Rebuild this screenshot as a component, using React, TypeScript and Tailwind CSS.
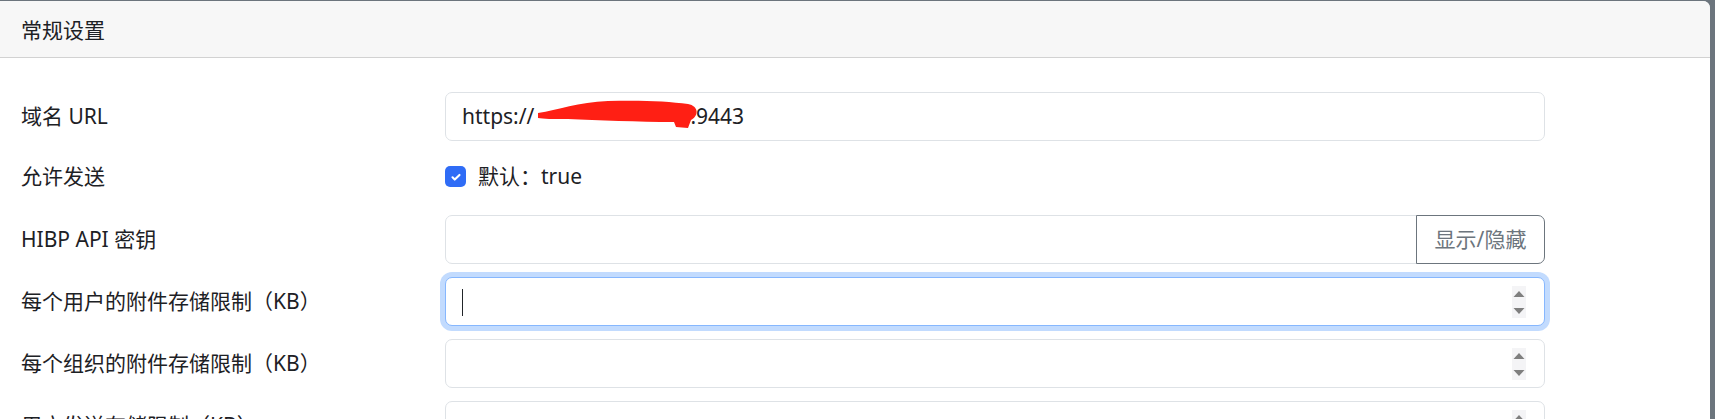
import React from "react";

const font = "font-['Noto_Sans','Noto_Sans_CJK_SC',sans-serif]";

function Spinner() {
  return (
    <div className="absolute right-[18px] top-[8px] h-[32px] w-[14px] bg-[#f4f4f6]">
      <svg width="14" height="32" viewBox="0 0 14 32">
        <polygon points="7,5 12.5,11 1.5,11" fill="#7f7f7f" />
        <polygon points="1.5,22 12.5,22 7,28" fill="#7f7f7f" />
      </svg>
    </div>
  );
}

function Row({ label, children }: { label: string; children: React.ReactNode }) {
  return (
    <div className="flex h-[49px] items-center">
      <div className="w-[424px] shrink-0">{label}</div>
      <div className="w-[1100px]">{children}</div>
    </div>
  );
}

export default function App() {
  return (
    <div
      className={`min-h-[419px] bg-[#6c757d] pr-[5px] pt-px text-[21px] text-[#1d2125] [text-spacing-trim:space-all] ${font}`}
    >
      <div className="h-[418px] overflow-hidden rounded-tr-[7px] bg-white">
        {/* 卡片头部 */}
        <div className="flex h-[57px] items-center border-b border-[#d2d2d2] bg-[#f7f7f7] pl-[21px] pt-[3px]">
          常规设置
        </div>

        {/* 表单 */}
        <div className="flex flex-col gap-[13px] pl-[21px] pt-[34px]">
          <Row label="域名 URL">
            <div className="relative flex h-[49px] w-full items-center rounded-[7px] border border-[#dee2e6] bg-white px-4">
              <span>https://</span>
              <span className="w-[156px]" />
              <span>.9443</span>
              <svg
                className="absolute left-[92px] top-[7px]"
                width="162"
                height="30"
                viewBox="0 0 162 30"
              >
                <path
                  d="M0,13 C20,10 40,2 70,1 C100,0 130,1 150,4 C161,6 161,16 153,20 L150,28 L138,27 L136,22 C100,22 60,20 30,19 C15,19 5,19 0,18 Z"
                  fill="#ff1f14"
                />
              </svg>
            </div>
          </Row>

          <div className="flex h-[48px] items-center pb-[3px]">
            <div className="w-[424px] shrink-0">允许发送</div>
            <label className="flex items-center gap-3">
              <span className="flex h-[21px] w-[21px] items-center justify-center rounded-[5px] bg-[#2f6cf6]">
                <svg width="14" height="14" viewBox="0 0 20 20">
                  <path
                    d="M5 10.5l3.2 3.2L15 7"
                    fill="none"
                    stroke="#fff"
                    strokeWidth="3"
                    strokeLinecap="round"
                    strokeLinejoin="round"
                  />
                </svg>
              </span>
              <span>默认：true</span>
            </label>
          </div>

          <Row label="HIBP API 密钥">
            <div className="flex h-[49px] w-full">
              <input
                type="password"
                className="h-full min-w-0 flex-1 rounded-l-[7px] border border-[#dee2e6] bg-white px-4 outline-none"
              />
              <button className="-ml-px h-full w-[129px] rounded-r-[7px] border border-[#6c757d] bg-white text-[#6c757d]">
                显示/隐藏
              </button>
            </div>
          </Row>

          <Row label="每个用户的附件存储限制（KB）">
            <div className="relative h-[49px] w-full rounded-[7px] border border-[#86b7fe] bg-white shadow-[0_0_0_5px_rgba(13,110,253,0.25)]">
              <span className="absolute left-[16px] top-[11px] h-[27px] w-px bg-[#212529]" />
              <Spinner />
            </div>
          </Row>

          <Row label="每个组织的附件存储限制（KB）">
            <div className="relative h-[49px] w-full rounded-[7px] border border-[#dee2e6] bg-white">
              <Spinner />
            </div>
          </Row>

          <Row label="用户发送存储限制（KB）">
            <div className="relative h-[49px] w-full rounded-[7px] border border-[#dee2e6] bg-white">
              <Spinner />
            </div>
          </Row>
        </div>
      </div>
    </div>
  );
}
